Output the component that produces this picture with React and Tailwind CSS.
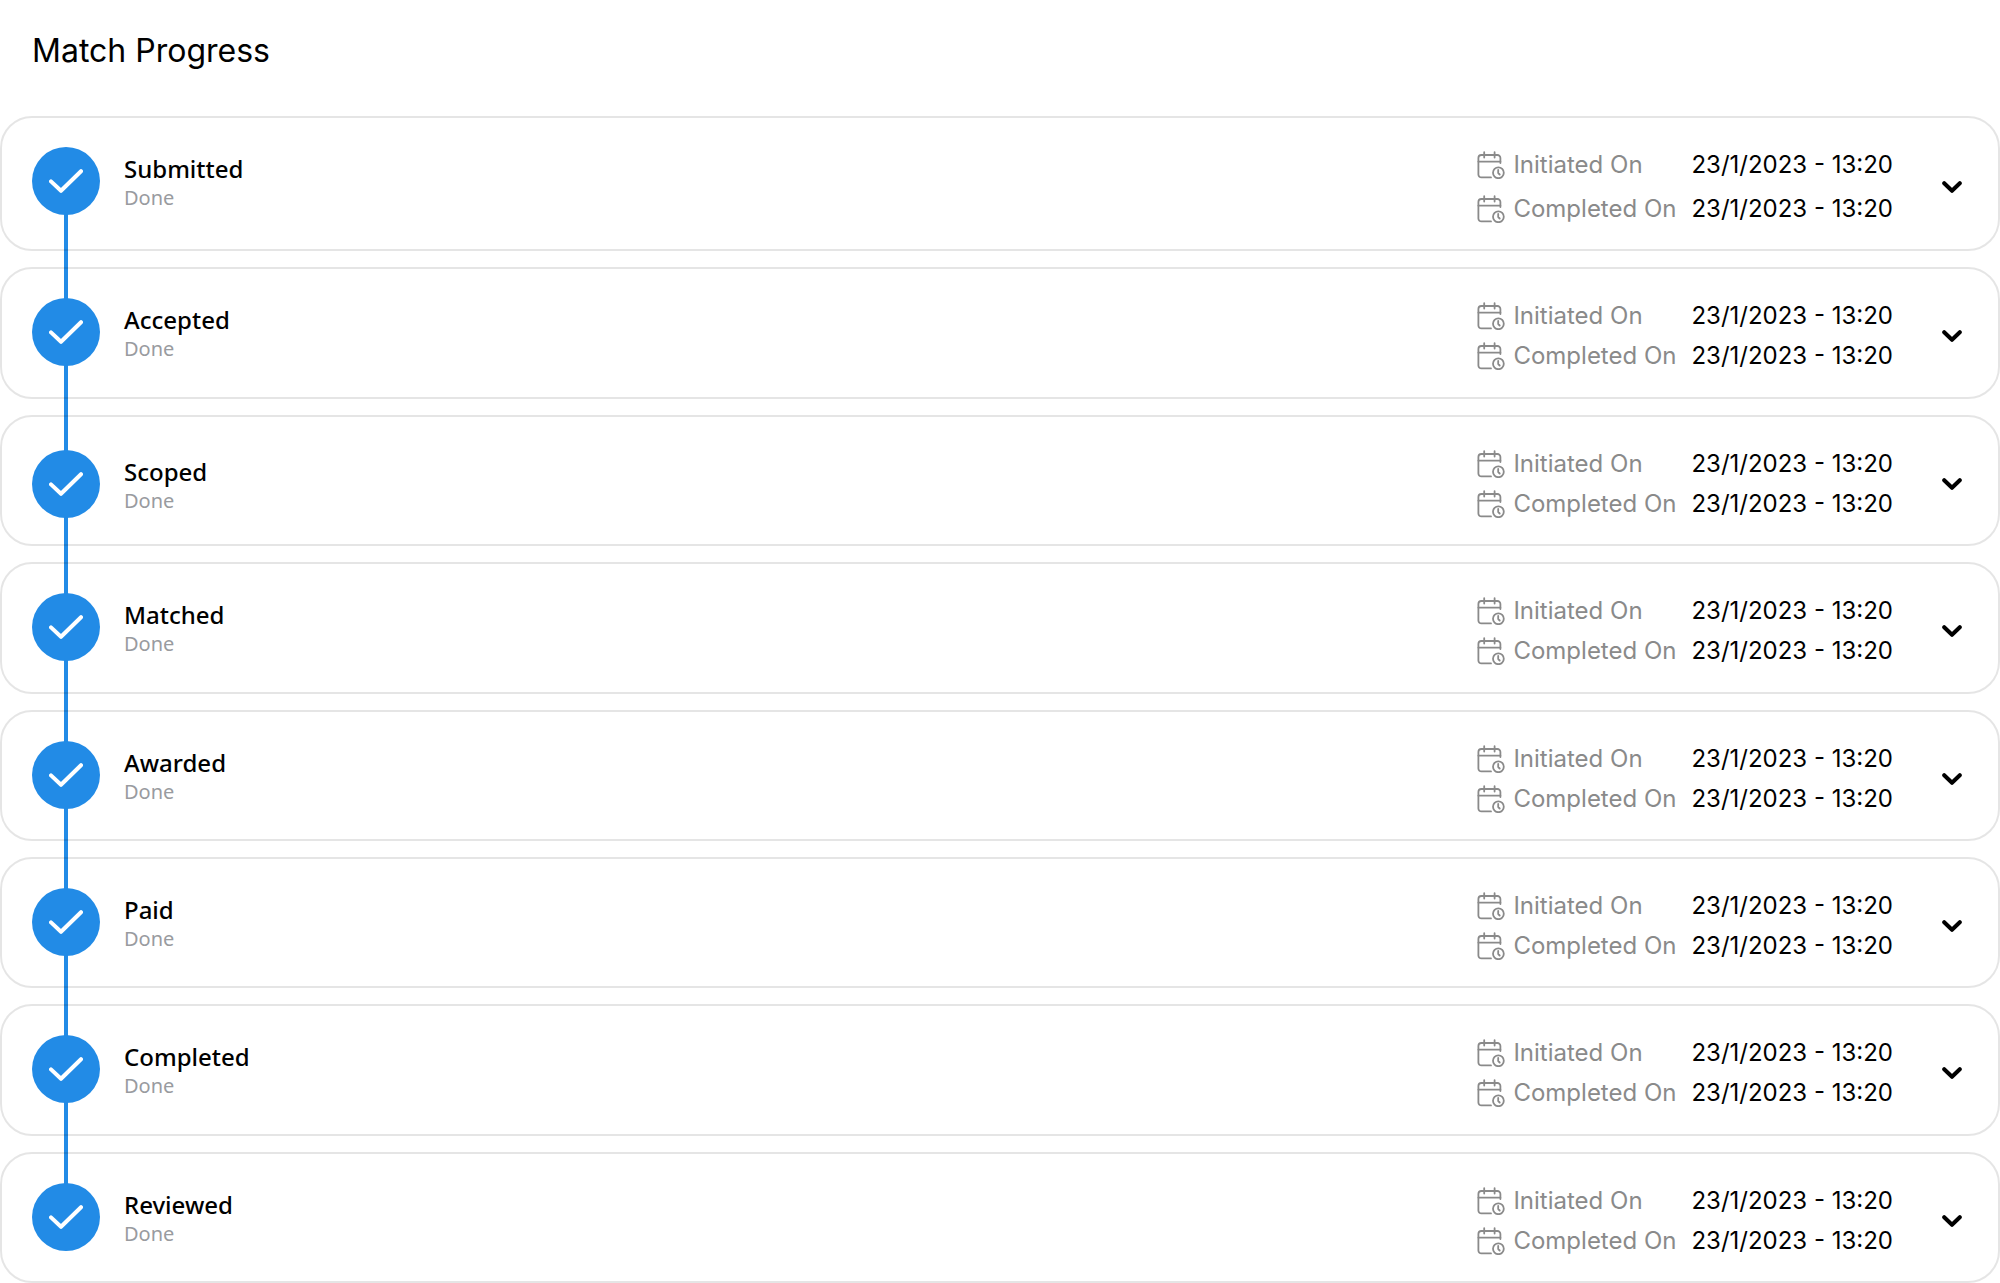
import React, { useState } from 'react';
import clsx from 'clsx';

const steps = [
  { name: 'Submitted', initiated: '23/1/2023 - 13:20', completed: '23/1/2023 - 13:20', spacious: true },
  { name: 'Accepted', initiated: '23/1/2023 - 13:20', completed: '23/1/2023 - 13:20' },
  { name: 'Scoped', initiated: '23/1/2023 - 13:20', completed: '23/1/2023 - 13:20', lowered: true },
  { name: 'Matched', initiated: '23/1/2023 - 13:20', completed: '23/1/2023 - 13:20' },
  { name: 'Awarded', initiated: '23/1/2023 - 13:20', completed: '23/1/2023 - 13:20' },
  { name: 'Paid', initiated: '23/1/2023 - 13:20', completed: '23/1/2023 - 13:20' },
  { name: 'Completed', initiated: '23/1/2023 - 13:20', completed: '23/1/2023 - 13:20' },
  { name: 'Reviewed', initiated: '23/1/2023 - 13:20', completed: '23/1/2023 - 13:20' },
];

const CalendarClock = () => (
  <svg viewBox="0 0 28 28" className="w-7 h-7 shrink-0" fill="none" stroke="currentColor" strokeWidth="1.8" strokeLinecap="round" strokeLinejoin="round" aria-hidden="true">
    <path d="M14 26.4H4.4a3 3 0 0 1-3-3V7a3 3 0 0 1 3-3h16a3 3 0 0 1 3 3v5" />
    <path d="M1.4 10.6h22M7.2 1.2v5.4M17.6 1.2v5.4" />
    <circle cx="21.4" cy="21.8" r="5.4" />
    <path d="M21.2 19v3l1.5 1.5" />
  </svg>
);

const CheckIcon = () => (
  <svg viewBox="0 0 34 24" className="w-[34px] h-6" fill="none" stroke="currentColor" strokeWidth="4" strokeLinecap="round" strokeLinejoin="round" aria-hidden="true">
    <path d="M2 12.4l10 9.4L32 2.2" />
  </svg>
);

const ChevronIcon = () => (
  <svg viewBox="0 0 20 12" className="w-5 h-3" fill="none" stroke="currentColor" strokeWidth="4" strokeLinecap="round" strokeLinejoin="round" aria-hidden="true">
    <path d="M2.2 2.2L10 9.8l7.8-7.6" />
  </svg>
);

const DateRow = ({ label, value }) => (
  <div className="flex items-center h-7">
    <dt className="flex items-center gap-2 w-[214px] text-[#8a8a8a]">
      <CalendarClock />
      {label}
    </dt>
    <dd>{value}</dd>
  </div>
);

const Step = ({ step, open, onToggle }) => (
  <li className="flex flex-auto justify-between items-start border-2 border-black/10 rounded-[32px] pt-[29px] pb-[26px] pl-[30px] pr-[14px]">
    <div className={clsx('flex items-start gap-6', step.lowered && 'pt-1')}>
      <span className="flex items-center justify-center w-[68px] h-[68px] rounded-full bg-[#228be6] text-white">
        <CheckIcon />
      </span>
      <div className="pt-2 font-['Noto_Sans',sans-serif]">
        <h2 className="text-2xl leading-7 font-medium text-black">{step.name}</h2>
        <p className="text-xl leading-[30px] text-[#999b9f]">Done</p>
      </div>
    </div>
    <div className="flex items-center gap-[27px] pt-1">
      <dl className={clsx('flex flex-col text-2xl leading-7 whitespace-nowrap', step.spacious ? 'gap-4' : 'gap-3')}>
        <DateRow label="Initiated On" value={step.initiated} />
        <DateRow label="Completed On" value={step.completed} />
      </dl>
      <button type="button" aria-label={`Toggle ${step.name}`} aria-expanded={open} onClick={onToggle}
        className={clsx('flex items-center justify-center w-16 h-10 transition-transform', open && 'rotate-180')}>
        <ChevronIcon />
      </button>
    </div>
  </li>
);

const App = () => {
  const [openStep, setOpenStep] = useState(null);

  return (
    <main className="flex flex-col min-h-screen bg-white text-black font-['Inter',sans-serif]">
      <h1 className="px-8 pt-[31px] pb-[45px] text-[32px] leading-10">Match Progress</h1>
      <ol className="relative isolate flex flex-col flex-auto gap-4">
        {/* Connector runs behind the cards, from the first circle to the last */}
        <span className="absolute -z-10 left-16 top-16 bottom-16 w-1 bg-[#228be6]" />
        {steps.map(step => (
          <Step key={step.name} step={step} open={openStep === step.name}
            onToggle={() => setOpenStep(openStep === step.name ? null : step.name)} />
        ))}
      </ol>
    </main>
  );
};

export default App;
